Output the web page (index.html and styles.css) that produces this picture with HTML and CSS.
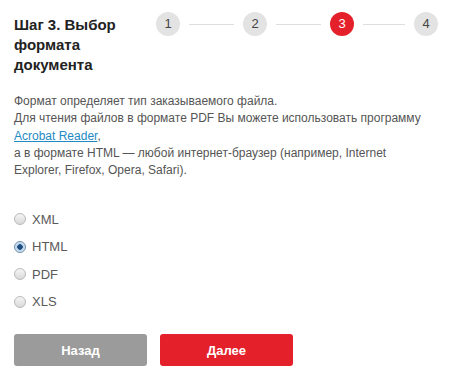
FILE: index.html
```html
<!DOCTYPE html>
<html lang="ru">
  <head>
    <meta charset="UTF-8" />
    <title>Выбор формата документа</title>
    <link rel="stylesheet" href="styles.css">
  </head>
  <body>
    <div class="wizard">
      <div class="wizard-head">
        <h2 class="step-title">Шаг 3. Выбор формата документа</h2>
        <div class="steps">
          <span class="step">1</span>
          <span class="step-line"></span>
          <span class="step">2</span>
          <span class="step-line"></span>
          <span class="step active">3</span>
          <span class="step-line short"></span>
          <span class="step">4</span>
        </div>
      </div>

      <p class="info">
        Формат определяет тип заказываемого файла.<br />
        Для чтения файлов в формате PDF Вы можете использовать программу<br />
        <a href="#">Acrobat Reader</a>,<br />
        а в формате HTML — любой интернет-браузер (например, Internet
        Explorer, Firefox, Opera, Safari).
      </p>

      <form class="formats">
        <label class="option"><input type="radio" name="format" value="xml" /> XML</label>
        <label class="option"><input type="radio" name="format" value="html" checked /> HTML</label>
        <label class="option"><input type="radio" name="format" value="pdf" /> PDF</label>
        <label class="option"><input type="radio" name="format" value="xls" /> XLS</label>

        <div class="buttons">
          <button type="button" class="btn btn-back">Назад</button>
          <button type="submit" class="btn btn-next">Далее</button>
        </div>
      </form>
    </div>
  </body>
</html>
```

FILE: styles.css
```css
* {
  margin: 0;
  padding: 0;
  box-sizing: border-box;
  font-family: Arial, "Liberation Sans", sans-serif;
}
body {
  background: #fff;
  width: 474px;
  height: 379px;
}
.wizard {
  padding: 12px 14px 0 14px;
}
.wizard-head {
  display: flex;
  align-items: flex-start;
}
.step-title {
  width: 142px;
  padding-right: 12px;
  font-size: 15px;
  line-height: 20px;
  font-weight: bold;
  color: #222;
  margin-top: 3px;
}
.steps {
  display: flex;
  align-items: center;
}
.step {
  width: 24px;
  height: 24px;
  border-radius: 50%;
  background: #e3e3e3;
  color: #444;
  font-size: 13px;
  line-height: 24px;
  text-align: center;
}
.step.active {
  background: #e4202a;
  color: #fff;
}
.step-line {
  width: 45px;
  height: 1px;
  margin: 0 9px;
  background: #dedede;
}
.step-line.short {
  width: 42px;
}
.info {
  margin-top: 18px;
  width: 415px;
  font-size: 12px;
  line-height: 17.3px;
  color: #555;
}
.info a {
  color: #1f8ac4;
}
.formats {
  margin-top: 26px;
}
.option {
  display: flex;
  align-items: center;
  height: 27.5px;
  font-size: 13px;
  color: #5a5a5a;
}
.option input {
  appearance: none;
  -webkit-appearance: none;
  width: 12px;
  height: 12px;
  margin-right: 6px;
  border: 1px solid #b9b9b9;
  border-radius: 50%;
  background: linear-gradient(#f5f5f5, #d9d9d9);
}
.option input:checked {
  border-color: #6f8eaa;
  background: radial-gradient(circle, #1d4f80 0, #1d4f80 2.5px, #b9d3ea 3px, #dde9f4 6px);
}
.buttons {
  display: flex;
  gap: 13px;
  margin-top: 19px;
}
.btn {
  width: 133px;
  height: 32px;
  border: none;
  border-radius: 3px;
  color: #fff;
  font-size: 13px;
  font-weight: bold;
  cursor: pointer;
}
.btn-back {
  background: #9b9b9b;
}
.btn-next {
  background: #e4202a;
}
```
